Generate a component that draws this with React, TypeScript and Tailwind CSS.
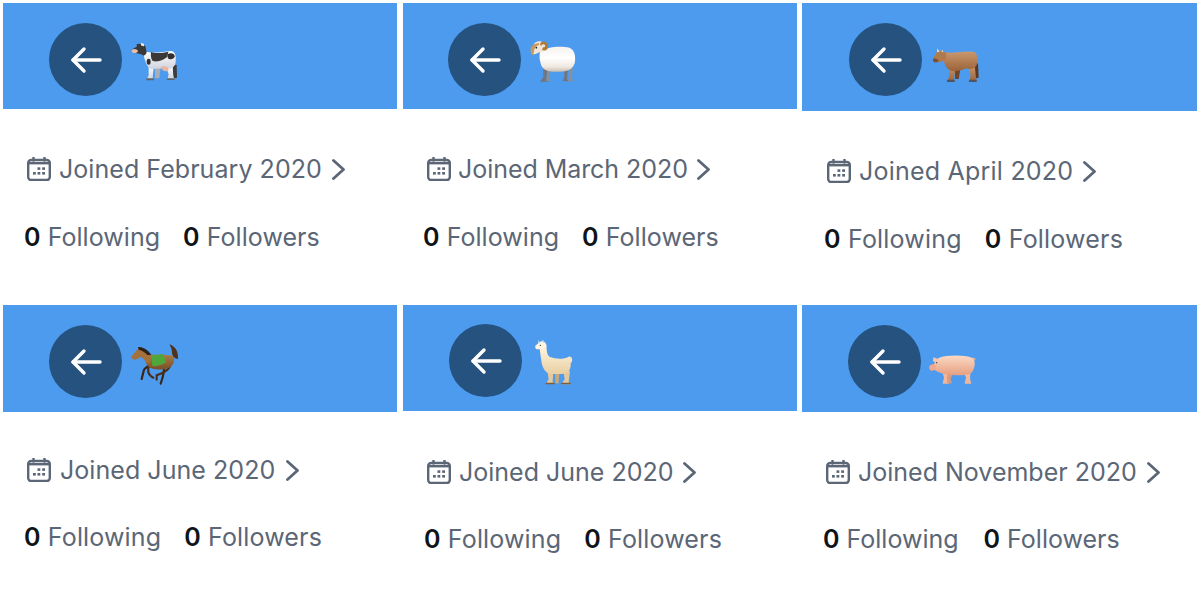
import React from "react";

const Defs = () => (
  <svg width="0" height="0" className="absolute">
    <defs>
      <filter id="soft"><feGaussianBlur stdDeviation="1.4" /></filter>
      <linearGradient id="cowBody" x1="0" y1="0" x2="0" y2="1"><stop offset="0" stopColor="#ffffff" /><stop offset="1" stopColor="#cfd3dc" /></linearGradient>
      <linearGradient id="sheepBody" x1="0" y1="0" x2="0" y2="1"><stop offset="0" stopColor="#f7f3ee" /><stop offset="0.45" stopColor="#ffffff" /><stop offset="0.8" stopColor="#efe8e0" /><stop offset="1" stopColor="#c9bdb0" /></linearGradient>
      <linearGradient id="oxBody" x1="0" y1="0" x2="0" y2="1"><stop offset="0" stopColor="#c9986f" /><stop offset="1" stopColor="#9c6238" /></linearGradient>
      <linearGradient id="horseBody" x1="0" y1="0" x2="0" y2="1"><stop offset="0" stopColor="#b17d45" /><stop offset="1" stopColor="#7a4f28" /></linearGradient>
      <linearGradient id="llamaBody" x1="0" y1="0" x2="0" y2="1"><stop offset="0" stopColor="#fff6e2" /><stop offset="1" stopColor="#e9cfa2" /></linearGradient>
      <linearGradient id="pigBody" x1="0" y1="0" x2="0" y2="1"><stop offset="0" stopColor="#fbd9c4" /><stop offset="1" stopColor="#e69f80" /></linearGradient>
    </defs>
  </svg>
);

const Cow = () => (
  <svg width="50" height="50" viewBox="270 60 150 150">
    <g filter="url(#soft)">
      <path d="M393 150 L410 150 L411 188 L402 190 Z" fill="#3c3a3c" />
      <path d="M345 155 L362 155 L358 190 L345 190 Z" fill="#a9adb6" />
      <path d="M326 150 L342 150 L338 187 L342 195 L320 195 L326 180 Z" fill="url(#cowBody)" />
      <path d="M378 155 L398 150 L400 185 L404 194 L382 194 L386 178 Z" fill="url(#cowBody)" />
      <path d="M312 108 C335 116 365 112 392 108 C405 108 409 122 407 140 C406 155 396 162 380 160 L335 162 C322 160 316 140 312 125 Z" fill="url(#cowBody)" />
      <path d="M362 156 C372 152 384 154 386 162 C384 172 368 172 362 156 Z" fill="#e5b5a5" />
      <path d="M333 111 C345 116 370 114 385 110 L382 125 C372 135 355 142 338 138 C332 130 332 120 333 111 Z" fill="#3a3838" />
      <path d="M383 118 C392 112 404 116 404 124 C402 134 388 136 383 128 Z" fill="#302e30" />
      <ellipse cx="326" cy="140" rx="6" ry="9" fill="#333133" />
      <path d="M290 88 C298 84 310 86 316 94 L320 112 C318 122 310 124 304 118 C296 116 284 114 276 111 C274 104 282 98 290 96 Z" fill="#3a3838" />
      <path d="M276 104 C282 100 292 102 294 108 C292 116 278 116 275 110 Z" fill="#e8bcae" />
      <path d="M302 84 L312 86 L312 94 L304 92 Z" fill="#f2ead9" />
      <path d="M320 190 L342 190 L342 196 L318 196 Z" fill="#5f646e" />
      <path d="M382 190 L404 190 L404 195 L380 195 Z" fill="#5f646e" />
    </g>
  </svg>
);

const Sheep = () => (
  <svg width="50" height="50" viewBox="267 60 150 150">
    <g filter="url(#soft)">
      <path d="M372 160 L384 160 L381 192 L386 199 L368 199 L373 184 Z" fill="#6f7580" />
      <path d="M386 160 L398 158 L396 190 L400 199 L384 199 L389 184 Z" fill="#8c8f94" />
      <path d="M310 160 L322 160 L319 192 L326 200 L300 200 L310 186 Z" fill="#6f7580" />
      <path d="M320 160 L331 160 L328 190 L332 198 L318 198 L322 182 Z" fill="#8c8f94" />
      <path d="M300 112 C315 96 360 92 388 98 C404 104 408 125 404 145 C398 165 380 172 350 170 C325 172 305 165 302 145 C298 132 298 122 300 112 Z" fill="url(#sheepBody)" />
      <path d="M284 84 C296 74 312 78 316 92 C318 104 310 112 300 112 C292 114 288 118 282 118 C274 116 274 104 278 96 Z" fill="#f2e6d8" />
      <path d="M300 86 C306 76 322 78 324 92 C326 104 314 110 306 104 L310 96 C316 100 318 90 312 88 C308 86 304 90 303 94 Z" fill="#b27a35" />
      <path d="M272 102 C272 92 284 86 296 84 L298 90 C288 92 282 98 282 112 L278 120 C273 118 271 110 272 102 Z" fill="#c99a5f" />
      <circle cx="289" cy="98" r="2.5" fill="#1d1d1d" />
    </g>
  </svg>
);

const Ox = () => (
  <svg width="50" height="50" viewBox="270 60 150 150">
    <g filter="url(#soft)">
      <path d="M392 150 L414 145 L416 188 L408 190 Z" fill="#5b3820" />
      <path d="M345 155 L362 155 L356 192 L345 192 Z" fill="#6f4526" />
      <path d="M326 150 L348 150 L342 190 L344 200 L322 200 L328 182 Z" fill="url(#oxBody)" />
      <path d="M384 155 L404 150 L408 188 L410 200 L388 200 L392 180 Z" fill="url(#oxBody)" />
      <path d="M310 112 C335 116 375 108 400 110 C412 112 414 130 412 145 C408 160 395 165 380 160 C365 166 345 172 330 166 C318 160 312 145 310 130 Z" fill="url(#oxBody)" />
      <path d="M290 112 C296 106 310 106 318 114 C322 126 318 138 308 138 C298 144 284 142 280 136 C278 128 286 122 290 112 Z" fill="#b07a50" />
      <path d="M279 132 C284 128 294 132 296 138 C292 144 282 143 279 138 Z" fill="#7a4e34" />
      <path d="M291 112 L292 100 L299 110 Z" fill="#e9dcc6" />
      <path d="M304 109 L308 104 L310 112 Z" fill="#e9dcc6" />
      <path d="M322 194 L344 194 L344 201 L320 201 Z" fill="#4e5660" />
      <path d="M388 194 L410 194 L410 201 L386 201 Z" fill="#4e5660" />
    </g>
  </svg>
);

const Horse = () => (
  <svg width="50" height="50" viewBox="270 50 150 150">
    <g filter="url(#soft)">
      <path d="M336 130 C328 136 318 140 312 148 L305 176" fill="none" stroke="#3a2516" strokeWidth="6.5" strokeLinecap="round" />
      <path d="M328 136 C320 150 324 164 340 172" fill="none" stroke="#4a2f1b" strokeWidth="6.5" strokeLinecap="round" />
      <path d="M372 132 C374 148 372 162 362 190" fill="none" stroke="#3a2516" strokeWidth="6.5" strokeLinecap="round" />
      <path d="M388 128 C398 142 374 156 350 165 L350 178" fill="none" stroke="#4a2f1b" strokeWidth="6.5" strokeLinecap="round" />
      <path d="M320 100 C340 106 375 100 398 106 C406 116 402 134 388 142 C366 150 338 150 324 138 C316 128 314 112 320 100 Z" fill="url(#horseBody)" />
      <path d="M334 106 C345 104 362 100 370 102 L378 126 C362 136 344 140 337 136 Z" fill="#4fa63b" />
      <path d="M296 84 C306 82 324 90 332 104 L328 132 C318 126 312 116 304 110 L286 118 C276 118 273 111 276 106 Z" fill="#a4713c" />
      <path d="M294 80 C304 78 324 86 334 104 L322 104 C316 96 306 90 296 88 Z" fill="#2f2018" />
      <path d="M388 72 C402 76 416 90 414 116 C404 116 396 108 396 96 C396 86 392 80 388 72 Z" fill="#50331f" />
    </g>
  </svg>
);

const Llama = () => (
  <svg width="50" height="50" viewBox="270 46 150 150">
    <g filter="url(#soft)">
      <path d="M322 150 L340 150 L338 184 L344 190 L318 190 L326 176 Z" fill="#e4c99c" />
      <path d="M370 150 L390 150 L386 184 L392 191 L364 191 L374 176 Z" fill="#e4c99c" />
      <path d="M346 150 L358 150 L356 188 L346 188 Z" fill="#c9ab7e" />
      <path d="M298 78 L318 74 C322 90 318 104 332 110 C350 116 372 116 386 108 C398 106 400 122 392 128 C394 145 385 160 365 160 L330 160 C316 155 306 140 304 120 C302 105 300 92 298 78 Z" fill="url(#llamaBody)" />
      <path d="M296 66 C304 58 318 60 320 76 C318 84 308 86 300 86 L290 86 C284 82 284 74 290 72 Z" fill="#fff4df" />
      <path d="M296 58 L301 68 L294 68 Z M308 56 L313 66 L306 66 Z" fill="#bfe0ef" />
      <circle cx="301" cy="74" r="2" fill="#2e2a28" />
      <path d="M318 186 L344 186 L344 191 L316 191 Z" fill="#7d5d3e" />
      <path d="M364 186 L392 186 L392 191 L362 191 Z" fill="#7d5d3e" />
    </g>
  </svg>
);

const Pig = () => (
  <svg width="50" height="50" viewBox="267 51 150 150">
    <g filter="url(#soft)">
      <path d="M305 150 L330 150 L322 176 L328 191 L308 191 L312 172 Z" fill="#f0b79c" />
      <path d="M322 155 L340 155 L332 178 L336 190 L322 190 Z" fill="#d99a7e" />
      <path d="M368 155 L392 150 L390 176 L394 191 L374 191 L378 172 Z" fill="#f0b79c" />
      <path d="M296 114 C320 105 370 104 398 114 C408 125 405 145 395 158 C375 168 345 168 320 162 C304 162 295 155 288 152 L280 148 C278 138 284 124 296 114 Z" fill="url(#pigBody)" />
      <path d="M279 124 L280 112 L296 118 L290 128 Z" fill="#f6c7ad" />
      <path d="M270 136 C276 130 286 132 288 140 C288 150 276 155 270 150 C267 146 267 140 270 136 Z" fill="#f0a98f" />
      <circle cx="290" cy="128" r="2" fill="#3a2a25" />
      <path d="M398 112 L407 116 L402 124 Z" fill="#e8b298" />
    </g>
  </svg>
);

const BackButton = () => (
  <div className="flex h-[73px] w-[73px] shrink-0 items-center justify-center rounded-full bg-[#25527f]">
    <svg width="32" height="28" viewBox="0 0 32 28" fill="none" stroke="white" strokeWidth="3.4" strokeLinecap="round" strokeLinejoin="round">
      <path d="M3 14 H30" />
      <path d="M14 3 L3 14 L14 25" />
    </svg>
  </div>
);

const CalendarIcon = () => (
  <svg width="24" height="24" viewBox="0 0 24 24" fill="none" stroke="#5b6676" strokeWidth="2.4" className="shrink-0">
    <rect x="1.2" y="3" width="21.6" height="20" rx="3" />
    <path d="M6.5 0.5 V3.5 M17.5 0.5 V3.5" strokeLinecap="round" />
    <g fill="#5b6676" stroke="none">
      <rect x="1" y="5" width="22" height="2.4" />
      <rect x="10.5" y="10.3" width="2.8" height="2.6" />
      <rect x="15.2" y="10.3" width="2.8" height="2.6" />
      <rect x="6" y="15" width="2.8" height="2.6" />
      <rect x="10.5" y="15" width="2.8" height="2.6" />
      <rect x="15.2" y="15" width="2.8" height="2.6" />
    </g>
  </svg>
);

const Chevron = () => (
  <svg width="13" height="21" viewBox="0 0 13 21" fill="none" stroke="#5b6676" strokeWidth="2.8" strokeLinecap="round" strokeLinejoin="round" className="ml-0.5 shrink-0">
    <path d="M1.5 1.5 L11.5 10.5 L1.5 19.5" />
  </svg>
);

const cards = [
  { month: "February", animal: <Cow />, width: "w-[394px]", banner: "h-[106px] pl-[46px] pt-5", joined: "mt-[48px] pl-6 gap-2 tracking-[0.05px]", stats: "mt-[44px] pl-[21px] gap-[23px] tracking-[0.05px]" },
  { month: "March", animal: <Sheep />, width: "w-[394px]", banner: "h-[106px] pl-[45px] pt-5", joined: "mt-[48px] pl-6 gap-[7px] tracking-[-0.05px]", stats: "mt-[44px] pl-5 gap-[23px] tracking-[0.05px]" },
  { month: "April", animal: <Ox />, width: "w-[395px]", banner: "h-[108px] pl-[47px] pt-5", joined: "mt-[48px] pl-[25px] gap-2 tracking-[0.22px]", stats: "mt-[44px] pl-[22px] gap-[23px] tracking-[0.2px]" },
  { month: "June", animal: <Horse />, width: "w-[394px]", banner: "h-[107px] pl-[46px] pt-5", joined: "mt-[46px] pl-6 gap-[9px] tracking-[0.05px]", stats: "mt-[43px] pl-[21px] gap-[23px] tracking-[0.15px]" },
  { month: "June", animal: <Llama />, width: "w-[394px]", banner: "h-[106px] pl-[46px] pt-[19px]", joined: "mt-[49px] pl-6 gap-2", stats: "mt-[43px] pl-[21px] gap-[23px] tracking-[0.15px]" },
  { month: "November", animal: <Pig />, width: "w-[395px]", banner: "h-[107px] pl-[46px] pt-5", joined: "mt-[48px] pl-6 gap-2", stats: "mt-[43px] pl-[21px] gap-[25px]" },
];

export default function App() {
  return (
    <div className="h-[604px] w-[1200px] overflow-hidden bg-white pl-[3px] pt-[3px] font-['Inter',sans-serif]">
      <Defs />
      <div className="grid grid-cols-[400px_399px_395px] grid-rows-[302px_299px]">
        {cards.map((c, i) => (
          <div key={i} className={c.width}>
            <div className={"flex gap-2 bg-[#4c9bef] " + c.banner}>
              <div className="flex items-center gap-2 self-start">
                <BackButton />
                {c.animal}
              </div>
            </div>
            <div className={"flex h-6 items-center text-[25px] leading-none text-[#5b6676] " + c.joined}>
              <CalendarIcon />
              <span>Joined {c.month} 2020</span>
              <Chevron />
            </div>
            <div className={"flex h-6 items-center text-[25px] leading-none text-[#5b6676] " + c.stats}>
              <span><b className="font-semibold text-[#0f1419]">0</b> Following</span>
              <span><b className="font-semibold text-[#0f1419]">0</b> Followers</span>
            </div>
          </div>
        ))}
      </div>
    </div>
  );
}
